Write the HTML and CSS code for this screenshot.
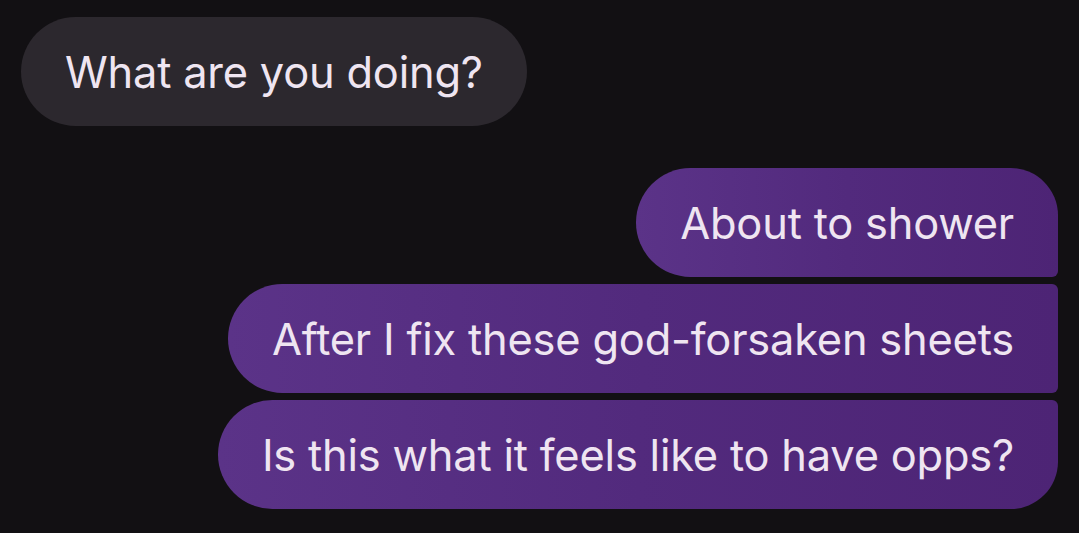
FILE: index.html
```html
<!DOCTYPE html>
<html>
<head>
<meta charset="utf-8">
<link rel="stylesheet" href="styles.css">
</head>
<body>
<div class="thread">
  <div class="bubble received">What are you doing?</div>
  <div class="sent-group">
    <div class="bubble sent first">About to shower</div>
    <div class="bubble sent middle">After I fix these god-forsaken sheets</div>
    <div class="bubble sent last">Is this what it feels like to have opps?</div>
  </div>
</div>
</body>
</html>
```

FILE: styles.css
```css
html, body {
  margin: 0;
  padding: 0;
  background: #121013;
  height: 100%;
}
.thread {
  display: flex;
  flex-direction: column;
  padding: 17px 21px 0 21px;
  gap: 42px;
  font-family: "Inter", "Roboto", sans-serif;
}
.bubble {
  box-sizing: border-box;
  height: 109px;
  display: flex;
  align-items: center;
  padding: 0 44px;
  font-size: 43.4px;
  color: #efe5f1;
  white-space: nowrap;
  letter-spacing: -0.2px;
}
.received {
  align-self: flex-start;
  background: #2c282e;
  border-radius: 55px;
}
.sent-group {
  display: flex;
  flex-direction: column;
  align-items: flex-end;
  gap: 7px;
}
.sent {
  background: linear-gradient(90deg, #5b3388 0%, #522a7d 50%, #4d2475 100%);
}
.sent.first {
  border-radius: 55px 48px 6px 55px;
}
.sent.middle {
  border-radius: 55px 6px 6px 55px;
}
.sent.last {
  border-radius: 55px 6px 48px 55px;
}
```
